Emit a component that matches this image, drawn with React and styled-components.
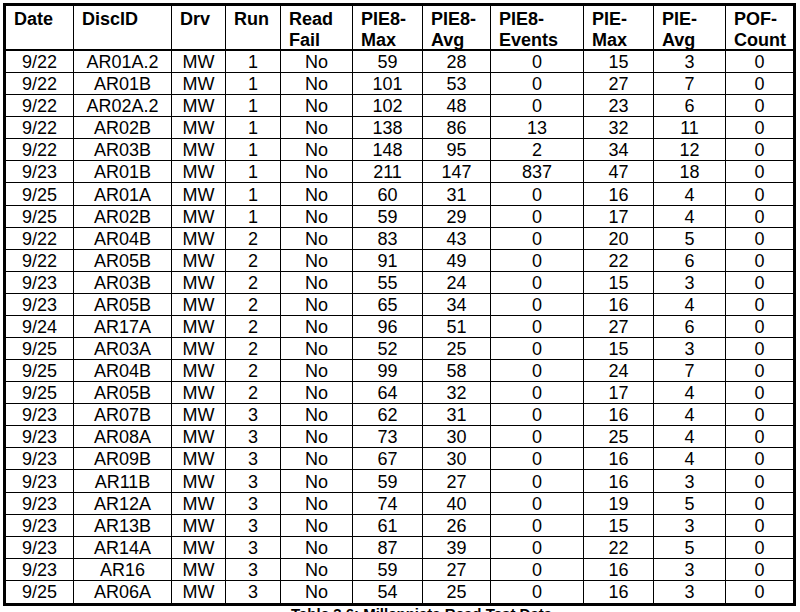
import React from "react";
import styled, { createGlobalStyle } from "styled-components";

const Global = createGlobalStyle`
  html, body { margin: 0; padding: 0; background: #fff; }
  body { font-family: "Liberation Sans", Arial, sans-serif; color: #000; overflow: hidden; }
`;

const Page = styled.div`
  padding: 3px 0 0 3px;
  width: 800px;
  height: 612px;
  box-sizing: border-box;
`;

const Grid = styled.div`
  display: grid;
  grid-template-columns: 68px 98px 54px 55px 72px 70px 68px 93px 70px 72px 67px;
  grid-template-rows: 45px;
  grid-auto-rows: 22.08px;
  border: 3px solid #000;
  width: max-content;
`;

const HeadCell = styled.div`
  box-sizing: border-box;
  padding: 3px 0 0 8px;
  font-weight: bold;
  font-size: 18px;
  line-height: 21px;
  border-bottom: 2px solid #000;
  border-right: ${(p) => (p.$last ? "none" : "1px solid #000")};
  white-space: pre-line;
`;

const Cell = styled.div`
  box-sizing: border-box;
  display: flex;
  align-items: center;
  justify-content: center;
  font-size: 18px;
  line-height: 20px;
  padding-top: 1px;
  border-right: ${(p) => (p.$last ? "none" : "1px solid #000")};
  border-bottom: ${(p) => (p.$bottom ? "none" : "1px solid #000")};
`;

const Caption = styled.div`
  margin: 0;
  width: 797px;
  text-align: center;
  padding-left: 40px;
  box-sizing: border-box;
  font-weight: bold;
  font-size: 15px;
  line-height: 16px;
`;

const headers = [
  "Date",
  "DiscID",
  "Drv",
  "Run",
  "Read\nFail",
  "PIE8-\nMax",
  "PIE8-\nAvg",
  "PIE8-\nEvents",
  "PIE-\nMax",
  "PIE-\nAvg",
  "POF-\nCount",
];

const rows = [
  ["9/22", "AR01A.2", "MW", "1", "No", "59", "28", "0", "15", "3", "0"],
  ["9/22", "AR01B", "MW", "1", "No", "101", "53", "0", "27", "7", "0"],
  ["9/22", "AR02A.2", "MW", "1", "No", "102", "48", "0", "23", "6", "0"],
  ["9/22", "AR02B", "MW", "1", "No", "138", "86", "13", "32", "11", "0"],
  ["9/22", "AR03B", "MW", "1", "No", "148", "95", "2", "34", "12", "0"],
  ["9/23", "AR01B", "MW", "1", "No", "211", "147", "837", "47", "18", "0"],
  ["9/25", "AR01A", "MW", "1", "No", "60", "31", "0", "16", "4", "0"],
  ["9/25", "AR02B", "MW", "1", "No", "59", "29", "0", "17", "4", "0"],
  ["9/22", "AR04B", "MW", "2", "No", "83", "43", "0", "20", "5", "0"],
  ["9/22", "AR05B", "MW", "2", "No", "91", "49", "0", "22", "6", "0"],
  ["9/23", "AR03B", "MW", "2", "No", "55", "24", "0", "15", "3", "0"],
  ["9/23", "AR05B", "MW", "2", "No", "65", "34", "0", "16", "4", "0"],
  ["9/24", "AR17A", "MW", "2", "No", "96", "51", "0", "27", "6", "0"],
  ["9/25", "AR03A", "MW", "2", "No", "52", "25", "0", "15", "3", "0"],
  ["9/25", "AR04B", "MW", "2", "No", "99", "58", "0", "24", "7", "0"],
  ["9/25", "AR05B", "MW", "2", "No", "64", "32", "0", "17", "4", "0"],
  ["9/23", "AR07B", "MW", "3", "No", "62", "31", "0", "16", "4", "0"],
  ["9/23", "AR08A", "MW", "3", "No", "73", "30", "0", "25", "4", "0"],
  ["9/23", "AR09B", "MW", "3", "No", "67", "30", "0", "16", "4", "0"],
  ["9/23", "AR11B", "MW", "3", "No", "59", "27", "0", "16", "3", "0"],
  ["9/23", "AR12A", "MW", "3", "No", "74", "40", "0", "19", "5", "0"],
  ["9/23", "AR13B", "MW", "3", "No", "61", "26", "0", "15", "3", "0"],
  ["9/23", "AR14A", "MW", "3", "No", "87", "39", "0", "22", "5", "0"],
  ["9/23", "AR16", "MW", "3", "No", "59", "27", "0", "16", "3", "0"],
  ["9/25", "AR06A", "MW", "3", "No", "54", "25", "0", "16", "3", "0"],
];

export default function App() {
  return (
    <Page>
      <Global />
      <Grid>
        {headers.map((h, i) => (
          <HeadCell key={h} $last={i === headers.length - 1}>
            {h}
          </HeadCell>
        ))}
        {rows.map((r, ri) =>
          r.map((v, ci) => (
            <Cell
              key={ri + "-" + ci}
              $last={ci === r.length - 1}
              $bottom={ri === rows.length - 1}
            >
              {v}
            </Cell>
          ))
        )}
      </Grid>
      <Caption>Table 3.6: Millenniata Read Test Data</Caption>
    </Page>
  );
}
